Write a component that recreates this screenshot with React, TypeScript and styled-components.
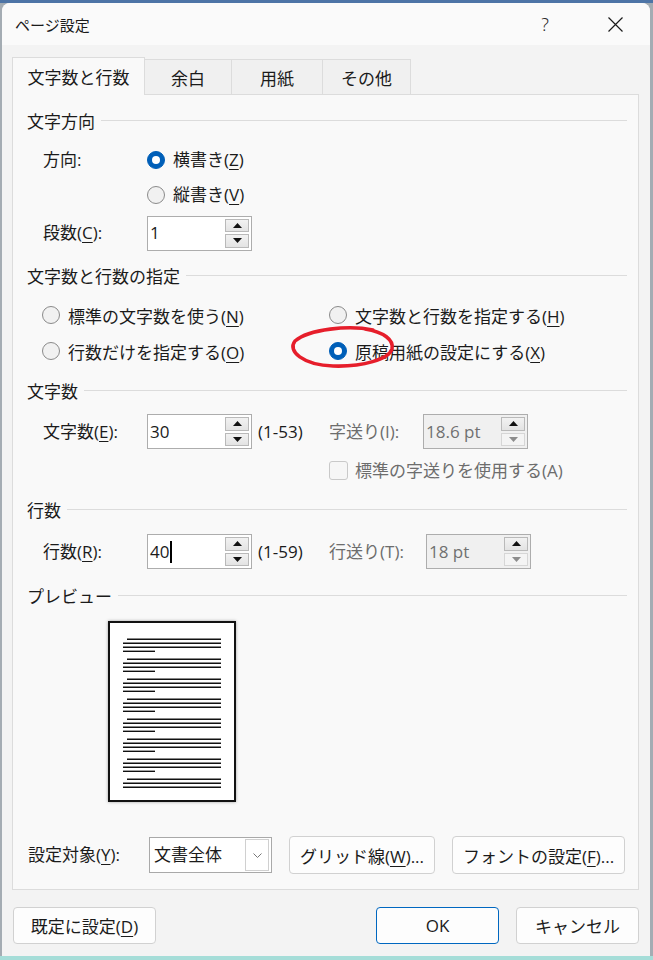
import styled, { createGlobalStyle, css } from 'styled-components';

const GlobalStyle = createGlobalStyle`
  html, body {
    margin: 0;
    padding: 0;
  }

  body {
    font-family: 'Open Sans', 'Noto Sans CJK JP', sans-serif;
    color: #1b1b1b;
    background: #9aa3ab;
  }

  u {
    text-decoration-thickness: 1px;
    text-underline-offset: 3px;
  }
`;

const Styled = {
  Screen: styled.div`
    box-sizing: border-box;
    width: 653px;
    height: 960px;
    padding: 3px 3px 0 2px;
    background: linear-gradient(#4d74a6 0 3px, #a4acb3 3px);
    border-bottom: 4px solid #a5ddd8;
  `,

  Dialog: styled.div`
    display: flex;
    flex-direction: column;
    height: 100%;
    background: #f3f3f3;
    border-radius: 8px 8px 0 0;
    overflow: hidden;
  `,

  TitleBar: styled.div`
    display: flex;
    align-items: center;
    height: 42px;
    padding-left: 13px;
    background: #fafafa;
    font-size: 15px;
  `,

  Title: styled.span`
    flex: 1;
  `,

  TitleButton: styled.span`
    display: grid;
    place-items: center;
    width: 70px;
    height: 42px;
    font-family: 'Noto Sans', sans-serif;
    font-size: 18px;
    font-weight: 300;
    color: #2b2b2b;
  `,

  Body: styled.div`
    display: flex;
    flex-direction: column;
    flex: 1;
    padding: 12px 11px 0 10px;
  `,

  Tabs: styled.div`
    display: flex;
    align-items: flex-end;
    height: 37px;
  `,

  Tab: styled.div<{ $w: number; $active?: boolean }>`
    display: grid;
    place-items: center;
    box-sizing: border-box;
    width: ${({ $w }) => $w}px;
    height: 35px;
    margin-left: -1px;
    border: 1px solid #dcdcdc;
    border-bottom: none;
    background: #f0f0f0;
    font-size: 17px;

    ${({ $active }) => $active && css`
      position: relative;
      z-index: 1;
      height: 38px;
      margin: 0 0 -1px 0;
      background: #f9f9f9;
    `}
  `,

  Panel: styled.div`
    box-sizing: border-box;
    height: 796px;
    padding: 15px 11px 0 14px;
    background: #f9f9f9;
    border: 1px solid #dcdcdc;
    font-size: 17px;
  `,

  Header: styled.div<{ $mt?: number }>`
    display: flex;
    align-items: center;
    height: 24px;
    line-height: 24px;
    margin-top: ${({ $mt = 0 }) => $mt}px;

    &::after {
      content: '';
      flex: 1;
      height: 1px;
      margin: -3px 0 0 6px;
      background: #dcdcdc;
    }
  `,

  FieldRow: styled.div<{ $mt?: number; $h?: number; $indent?: number }>`
    display: flex;
    align-items: center;
    height: ${({ $h = 34 }) => $h}px;
    margin-top: ${({ $mt = 0 }) => $mt}px;
    padding-left: ${({ $indent = 16 }) => $indent}px;
    line-height: 24px;
  `,

  FieldLabel: styled.span<{ $w: number; $dim?: boolean }>`
    flex-shrink: 0;
    width: ${({ $w }) => $w}px;
    white-space: nowrap;
    color: ${({ $dim }) => ($dim ? '#6d6d6d' : 'inherit')};
  `,

  Radio: styled.label`
    display: flex;
    align-items: center;
    gap: 8px;
    white-space: nowrap;
  `,

  RadioDot: styled.span<{ $on?: boolean }>`
    flex-shrink: 0;
    box-sizing: border-box;
    width: 18px;
    height: 18px;
    border-radius: 50%;
    background: #f1f1f1;
    border: 1px solid #8a8a8a;

    ${({ $on }) => $on && css`
      display: grid;
      place-items: center;
      background: #005fb8;
      border-color: #005fb8;

      &::after {
        content: '';
        width: 8px;
        height: 8px;
        border-radius: 50%;
        background: #fff;
      }
    `}
  `,

  RadioGrid: styled.div`
    display: grid;
    grid-template-columns: 287px auto;
    grid-auto-rows: 34px;
    row-gap: 2px;
    align-items: center;
    margin-top: 9px;
    padding-left: 15px;
  `,

  RadioCell: styled.div`
    position: relative;
  `,

  Circle: styled.svg`
    position: absolute;
    left: -42px;
    top: -15px;
    overflow: visible;
    pointer-events: none;
  `,

  SpinBox: styled.div<{ $disabled?: boolean }>`
    display: flex;
    justify-content: space-between;
    flex-shrink: 0;
    box-sizing: border-box;
    width: 105px;
    height: 35px;
    padding: 2px 2px 2px 2px;
    border: 1px solid #adadad;
    background: ${({ $disabled }) => ($disabled ? '#f0f0f0' : '#fff')};
    color: ${({ $disabled }) => ($disabled ? '#707070' : '#1b1b1b')};
  `,

  SpinValue: styled.span`
    display: flex;
    align-items: center;
  `,

  Caret: styled.span`
    width: 2px;
    height: 22px;
    margin-left: 1px;
    background: #000;
  `,

  SpinButtons: styled.div`
    display: flex;
    flex-direction: column;
    gap: 2px;
    width: 24px;
  `,

  SpinButton: styled.span<{ $dim?: boolean }>`
    display: grid;
    place-items: center;
    flex: 1;
    box-sizing: border-box;
    border: 1px solid ${({ $dim }) => ($dim ? '#d6d6d6' : '#b9b9b9')};
    background: ${({ $dim }) => ($dim ? '#f4f4f4' : 'linear-gradient(#f2f2f2, #e3e3e3)')};
  `,

  RangeText: styled.span`
    flex-shrink: 0;
    box-sizing: border-box;
    width: 77px;
    padding-left: 6px;
  `,

  Check: styled.label`
    display: flex;
    align-items: center;
    gap: 7px;
    color: #6d6d6d;
  `,

  CheckBox: styled.span`
    box-sizing: border-box;
    width: 19px;
    height: 19px;
    border: 1px solid #c9c9c9;
    border-radius: 3px;
    background: #f6f6f6;
  `,

  PreviewPage: styled.div`
    box-sizing: border-box;
    width: 128px;
    height: 181px;
    margin: 12px 0 0 81px;
    border: 2px solid #121212;
    background: #fff;
    box-shadow: 0 0 3px rgba(0, 0, 0, 0.35);
  `,

  Select: styled.div`
    display: flex;
    align-items: center;
    justify-content: space-between;
    box-sizing: border-box;
    width: 123px;
    height: 36px;
    padding: 0 2px 0 4px;
    border: 1px solid #a9a9a9;
    background: #fff;
  `,

  SelectArrow: styled.span`
    display: grid;
    place-items: center;
    box-sizing: border-box;
    width: 24px;
    height: 32px;
    border: 1px solid #d0d0d0;
  `,

  Button: styled.button<{ $w: number; $h?: number; $ml?: number; $primary?: boolean }>`
    box-sizing: border-box;
    width: ${({ $w }) => $w}px;
    height: ${({ $h = 38 }) => $h}px;
    margin-left: ${({ $ml = 0 }) => $ml}px;
    padding: 0;
    border: 1px solid ${({ $primary }) => ($primary ? '#0067c0' : '#d1d1d1')};
    border-radius: 4px;
    background: #fdfdfd;
    font-family: inherit;
    font-size: 17px;
    white-space: nowrap;
    color: #1b1b1b;
  `,

  Footer: styled.div`
    display: flex;
    justify-content: space-between;
    margin-top: 17px;
    padding-left: 1px;
  `,

  FooterGroup: styled.div`
    display: flex;
    gap: 17px;
  `,
};

function Triangle({ up, dim }: { up?: boolean; dim?: boolean }) {
  return (
    <svg width="9" height="5" viewBox="0 0 9 5">
      <polygon points={up ? '4.5,0 9,5 0,5' : '0,0 9,0 4.5,5'} fill={dim ? '#8c8c8c' : '#111'} />
    </svg>
  );
}

function Spinner({ value, disabled, caret }: { value: string; disabled?: boolean; caret?: boolean }) {
  return (
    <Styled.SpinBox $disabled={disabled}>
      <Styled.SpinValue>
        {value}
        {caret && <Styled.Caret />}
      </Styled.SpinValue>
      <Styled.SpinButtons>
        <Styled.SpinButton>
          <Triangle up />
        </Styled.SpinButton>
        <Styled.SpinButton $dim={disabled}>
          <Triangle dim={disabled} />
        </Styled.SpinButton>
      </Styled.SpinButtons>
    </Styled.SpinBox>
  );
}

function Radio({ on, children }: { on?: boolean; children: React.ReactNode }) {
  return (
    <Styled.Radio>
      <Styled.RadioDot $on={on} />
      <span>{children}</span>
    </Styled.Radio>
  );
}

function PreviewLines() {
  const lines: { x1: number; x2: number; y: number }[] = [];
  for (let g = 0; g < 8; g++) {
    const top = 16.3 + g * 20;
    lines.push({ x1: 17, x2: 111, y: top });
    lines.push({ x1: 13, x2: 111, y: top + 4 });
    lines.push({ x1: 13, x2: 111, y: top + 8 });
    if (g < 7) lines.push({ x1: 13, x2: 45, y: top + 12 });
  }
  return (
    <svg width="124" height="177" viewBox="0 0 124 177">
      {lines.map((l, i) => (
        <line key={i} x1={l.x1} x2={l.x2} y1={l.y} y2={l.y} stroke="#111" strokeWidth="1.4" />
      ))}
    </svg>
  );
}

export default function App() {
  return (
    <>
      <GlobalStyle />
      <Styled.Screen>
        <Styled.Dialog>
          <Styled.TitleBar>
            <Styled.Title>ページ設定</Styled.Title>
            <Styled.TitleButton>?</Styled.TitleButton>
            <Styled.TitleButton>
              <svg width="15" height="15" viewBox="0 0 15 15">
                <path d="M0.5 0.5 L14.5 14.5 M14.5 0.5 L0.5 14.5" stroke="#1b1b1b" strokeWidth="1.2" />
              </svg>
            </Styled.TitleButton>
          </Styled.TitleBar>

          <Styled.Body>
            <Styled.Tabs>
              <Styled.Tab $w={133} $active>文字数と行数</Styled.Tab>
              <Styled.Tab $w={88}>余白</Styled.Tab>
              <Styled.Tab $w={92}>用紙</Styled.Tab>
              <Styled.Tab $w={89}>その他</Styled.Tab>
            </Styled.Tabs>

            <Styled.Panel>
              <Styled.Header>文字方向</Styled.Header>
              <Styled.FieldRow $mt={9}>
                <Styled.FieldLabel $w={104}>方向:</Styled.FieldLabel>
                <Radio on>横書き(<u>Z</u>)</Radio>
              </Styled.FieldRow>
              <Styled.FieldRow $mt={1}>
                <Styled.FieldLabel $w={104} />
                <Radio>縦書き(<u>V</u>)</Radio>
              </Styled.FieldRow>
              <Styled.FieldRow $mt={4}>
                <Styled.FieldLabel $w={104}>段数(<u>C</u>):</Styled.FieldLabel>
                <Spinner value="1" />
              </Styled.FieldRow>

              <Styled.Header $mt={15}>文字数と行数の指定</Styled.Header>
              <Styled.RadioGrid>
                <Radio>標準の文字数を使う(<u>N</u>)</Radio>
                <Radio>文字数と行数を指定する(<u>H</u>)</Radio>
                <Radio>行数だけを指定する(<u>O</u>)</Radio>
                <Styled.RadioCell>
                  <Radio on>原稿用紙の設定にする(<u>X</u>)</Radio>
                  <Styled.Circle width="112" height="47" viewBox="0 0 112 47">
                    <path
                      d="M86 6 C62 1, 22 5, 8 17 C0 27, 16 41, 46 42 C76 43, 102 35, 105 25 C107 16, 97 8, 78 5"
                      fill="none"
                      stroke="#e61e2b"
                      strokeWidth="3.6"
                      strokeLinecap="round"
                    />
                  </Styled.Circle>
                </Styled.RadioCell>
              </Styled.RadioGrid>

              <Styled.Header $mt={12}>文字数</Styled.Header>
              <Styled.FieldRow $mt={10} $h={35}>
                <Styled.FieldLabel $w={104}>文字数(<u>E</u>):</Styled.FieldLabel>
                <Spinner value="30" />
                <Styled.RangeText>(1-53)</Styled.RangeText>
                <Styled.FieldLabel $w={94} $dim>字送り(I):</Styled.FieldLabel>
                <Spinner value="18.6 pt" disabled />
              </Styled.FieldRow>
              <Styled.FieldRow $mt={9} $h={25} $indent={302}>
                <Styled.Check>
                  <Styled.CheckBox />
                  標準の字送りを使用する(A)
                </Styled.Check>
              </Styled.FieldRow>

              <Styled.Header $mt={16}>行数</Styled.Header>
              <Styled.FieldRow $mt={11} $h={35}>
                <Styled.FieldLabel $w={104}>行数(<u>R</u>):</Styled.FieldLabel>
                <Spinner value="40" caret />
                <Styled.RangeText>(1-59)</Styled.RangeText>
                <Styled.FieldLabel $w={97} $dim>行送り(T):</Styled.FieldLabel>
                <Spinner value="18 pt" disabled />
              </Styled.FieldRow>

              <Styled.Header $mt={16}>プレビュー</Styled.Header>
              <Styled.PreviewPage>
                <PreviewLines />
              </Styled.PreviewPage>

              <Styled.FieldRow $mt={34} $h={38} $indent={1}>
                <Styled.FieldLabel $w={121}>設定対象(<u>Y</u>):</Styled.FieldLabel>
                <Styled.Select>
                  <span>文書全体</span>
                  <Styled.SelectArrow>
                    <svg width="9" height="5" viewBox="0 0 9 5">
                      <polyline points="0.5,0.5 4.5,4.5 8.5,0.5" fill="none" stroke="#777" strokeWidth="1" />
                    </svg>
                  </Styled.SelectArrow>
                </Styled.Select>
                <Styled.Button $w={146} $ml={17}>グリッド線(<u>W</u>)...</Styled.Button>
                <Styled.Button $w={173} $ml={17}>フォントの設定(<u>F</u>)...</Styled.Button>
              </Styled.FieldRow>
            </Styled.Panel>

            <Styled.Footer>
              <Styled.Button $w={143} $h={37}>既定に設定(<u>D</u>)</Styled.Button>
              <Styled.FooterGroup>
                <Styled.Button $w={123} $h={37} $primary>OK</Styled.Button>
                <Styled.Button $w={123} $h={37}>キャンセル</Styled.Button>
              </Styled.FooterGroup>
            </Styled.Footer>
          </Styled.Body>
        </Styled.Dialog>
      </Styled.Screen>
    </>
  );
}
